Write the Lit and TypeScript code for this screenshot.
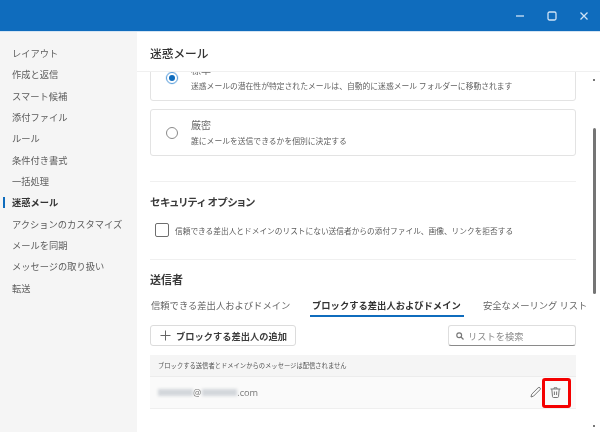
import { LitElement, html, css } from "lit";
import { customElement } from "lit/decorators.js";

const NAV = ["レイアウト","作成と返信","スマート候補","添付ファイル","ルール","条件付き書式","一括処理","迷惑メール","アクションのカスタマイズ","メールを同期","メッセージの取り扱い","転送"];

@customElement("app-root")
export class AppRoot extends LitElement {
  static styles = css`
    :host { display: block; width: 600px; height: 432px; overflow: hidden; background: #fff; color: #424242;
      font-family: "Noto Sans CJK JP", "Noto Sans", sans-serif; filter: blur(0.4px); }
    * { box-sizing: border-box; }
    .titlebar { height: 32px; background: #0f6cbd; border-bottom: 1px solid #d4e4f3; display: flex; justify-content: flex-end; align-items: center; }
    .win { width: 32px; height: 31px; display: flex; align-items: center; justify-content: center; }
    .win svg { width: 10px; height: 10px; stroke: #cfe3f6; fill: none; stroke-width: 1.3; }
    .body { display: flex; height: 400px; }
    .nav { width: 137px; background: #f5f5f5; padding-top: 10.5px; display: flex; flex-direction: column; flex: none; }
    .nav-item { height: 21.33px; display: flex; align-items: center; padding-left: 12px; font-size: 9.25px; color: #5c5c5c; position: relative; white-space: nowrap; }
    .nav-item.on { font-weight: 700; color: #333; }
    .nav-item.on::before { content: ""; position: absolute; left: 3px; top: 5px; width: 2px; height: 11px; background: #0f6cbd; }
    .main { flex: 1; display: flex; flex-direction: column; min-width: 0; }
    .head { height: 40px; padding-left: 13px; display: flex; align-items: center; font-size: 11.7px; font-weight: 500; color: #333; border-bottom: 1px solid #f0f0f0; flex: none; padding-top: 2px; }
    .area { flex: 1; display: flex; overflow: hidden; min-height: 0; }
    .scroll { width: 439px; padding-left: 13px; flex: none; }
    .inner { width: 426px; margin-top: -18px; }
    .bar { flex: 1; display: flex; flex-direction: column; align-items: center; padding-left: 12px; }
    .dot { width: 2px; height: 2px; background: #777; flex: none; }
    .thumb { width: 3px; height: 166px; border-radius: 2px; background: #757575; flex: none; }
    .dot.a { margin-top: 7px; margin-bottom: 47px; }
    .dot.b { margin-top: 131px; }
    .card { height: 47px; border: 1px solid #e3e3e3; border-radius: 3px; display: flex; align-items: center; margin-bottom: 8px; background: #fff; }
    .radio { width: 12px; height: 12px; border-radius: 50%; border: 1px solid #8a8a8a; margin: 0 13px 0 15px; flex: none; display: flex; align-items: center; justify-content: center; }
    .radio.on { border-color: #5a9fdc; box-shadow: 0 0 0 0.5px #cfe3f6; }
    .radio.on::after { content: ""; width: 6px; height: 6px; border-radius: 50%; background: #0f6cbd; }
    .t1 { font-size: 10px; line-height: 13px; color: #6a6a6a; }
    .t2 { font-size: 7.8px; line-height: 13px; color: #616161; margin-top: 3px; white-space: nowrap; }
    hr { border: 0; height: 1px; background: #f0f0f0; margin: 0; }
    .h2 { font-weight: 700; color: #3a3a3a; line-height: 14px; white-space: nowrap; }
    .sep1 { margin-top: 25px; }
    .sec1 { margin-top: 13px; font-size: 10.5px; font-feature-settings: "palt"; }
    .check { display: flex; align-items: center; margin-top: 14px; padding-left: 5px; }
    .box { width: 14px; height: 14px; border: 1px solid #6e6e6e; border-radius: 2px; margin-right: 6px; flex: none; }
    .check span { font-size: 7.7px; color: #5c5c5c; white-space: nowrap; }
    .sep2 { margin-top: 22px; }
    .sec2 { margin-top: 12px; font-size: 11px; }
    .tabs { display: flex; margin-top: 13px; height: 16px; font-size: 9.3px; color: #666; white-space: nowrap; line-height: 13px; }
    .tabs > div { flex: none; }
    .tab0 { margin-left: 1px; width: 159px; }
    .tab1 { width: 154px; padding: 0 0 0 2px; border-bottom: 2px solid #0f6cbd; font-weight: 700; color: #333; height: 18px; }
    .tab2 { margin-left: 19px; }
    .tools { display: flex; justify-content: space-between; margin-top: 10px; }
    .btn { width: 146px; height: 21px; border: 1px solid #dcdcdc; border-radius: 3px; display: flex; align-items: center; padding-left: 9px; font-size: 9.25px; font-weight: 700; color: #3d3d3d; white-space: nowrap; }
    .btn svg { width: 11px; height: 11px; stroke: #666; stroke-width: 1; margin-right: 5px; flex: none; }
    .search { width: 128px; height: 21px; border: 1px solid #dedede; border-bottom: 1px solid #8a8a8a; border-radius: 3px; display: flex; align-items: center; padding-left: 7px; font-size: 9.25px; color: #8a8a8a; white-space: nowrap; }
    .search svg { width: 8px; height: 8px; stroke: #777; fill: none; stroke-width: 1.2; margin-right: 4px; flex: none; }
    .info { margin-top: 9px; height: 22px; background: #f5f5f5; font-size: 6.3px; color: #555; display: flex; align-items: center; padding-left: 8px; white-space: nowrap; border-bottom: 1px solid #ececec; }
    .row { height: 32px; background: #fafafa; border-bottom: 1px solid #efefef; display: flex; align-items: center; padding-left: 8px; font-size: 9.2px; color: #777; font-family: "Open Sans", sans-serif; position: relative; }
    .mask { height: 7px; background: #d3d7db; filter: blur(1.5px); flex: none; }
    .m1 { width: 35px; }
    .m2 { width: 35px; margin-left: 1px; }
    .actions { margin-left: auto; display: flex; align-items: center; gap: 7px; padding-right: 14px; }
    .actions svg { width: 13px; height: 13px; stroke: #777; fill: none; stroke-width: 1; display: block; }
    .mark { position: absolute; left: 392px; top: 1px; width: 29px; height: 30px; border: 3px solid #f40000; border-radius: 3px; }
  `;

  render() {
    return html`
      <div class="titlebar">
        <div class="win"><svg viewBox="0 0 10 10"><path d="M1 5h8"/></svg></div>
        <div class="win"><svg viewBox="0 0 10 10"><rect x="1" y="1" width="8" height="8" rx="1.5"/></svg></div>
        <div class="win"><svg viewBox="0 0 10 10"><path d="M1.5 1.5l7 7M8.5 1.5l-7 7"/></svg></div>
      </div>
      <div class="body">
        <nav class="nav">
          ${NAV.map((n) => html`<div class="nav-item ${n === "迷惑メール" ? "on" : ""}">${n}</div>`)}
        </nav>
        <div class="main">
          <div class="head">迷惑メール</div>
          <div class="area">
            <div class="scroll"><div class="inner">
              <div class="card">
                <div class="radio on"></div>
                <div><div class="t1">標準</div><div class="t2">迷惑メールの潜在性が特定されたメールは、自動的に迷惑メール フォルダーに移動されます</div></div>
              </div>
              <div class="card">
                <div class="radio"></div>
                <div><div class="t1">厳密</div><div class="t2">誰にメールを送信できるかを個別に決定する</div></div>
              </div>
              <hr class="sep1" />
              <div class="h2 sec1">セキュリティ オプション</div>
              <div class="check"><div class="box"></div><span>信頼できる差出人とドメインのリストにない送信者からの添付ファイル、画像、リンクを拒否する</span></div>
              <hr class="sep2" />
              <div class="h2 sec2">送信者</div>
              <div class="tabs">
                <div class="tab0">信頼できる差出人およびドメイン</div>
                <div class="tab1">ブロックする差出人およびドメイン</div>
                <div class="tab2">安全なメーリング リスト</div>
              </div>
              <div class="tools">
                <div class="btn">
                  <svg viewBox="0 0 11 11"><path d="M5.5 0.5v10M0.5 5.5h10"/></svg>ブロックする差出人の追加
                </div>
                <div class="search">
                  <svg viewBox="0 0 8 8"><circle cx="3.2" cy="3.2" r="2.4"/><path d="M5 5l2.5 2.5"/></svg>リストを検索
                </div>
              </div>
              <div class="info">ブロックする送信者とドメインからのメッセージは配信されません</div>
              <div class="row">
                <div class="mask m1"></div><span>@</span><div class="mask m2"></div><span>.com</span>
                <div class="actions">
                  <svg viewBox="0 0 13 13"><path d="M2 11l.7-2.8 6.4-6.4a1.2 1.2 0 0 1 1.9 1.9L4.6 10.1 2 11z"/></svg>
                  <svg viewBox="0 0 13 13"><path d="M1.5 3h10M5 3V1.8h3V3M2.8 3l.7 7.6a1 1 0 0 0 1 .9h4a1 1 0 0 0 1-.9l.7-7.6M5.4 5.5v3.5M7.6 5.5v3.5"/></svg>
                </div>
                <div class="mark"></div>
              </div>
            </div></div>
            <div class="bar"><div class="dot a"></div><div class="thumb"></div><div class="dot b"></div></div>
          </div>
        </div>
      </div>
    `;
  }
}
